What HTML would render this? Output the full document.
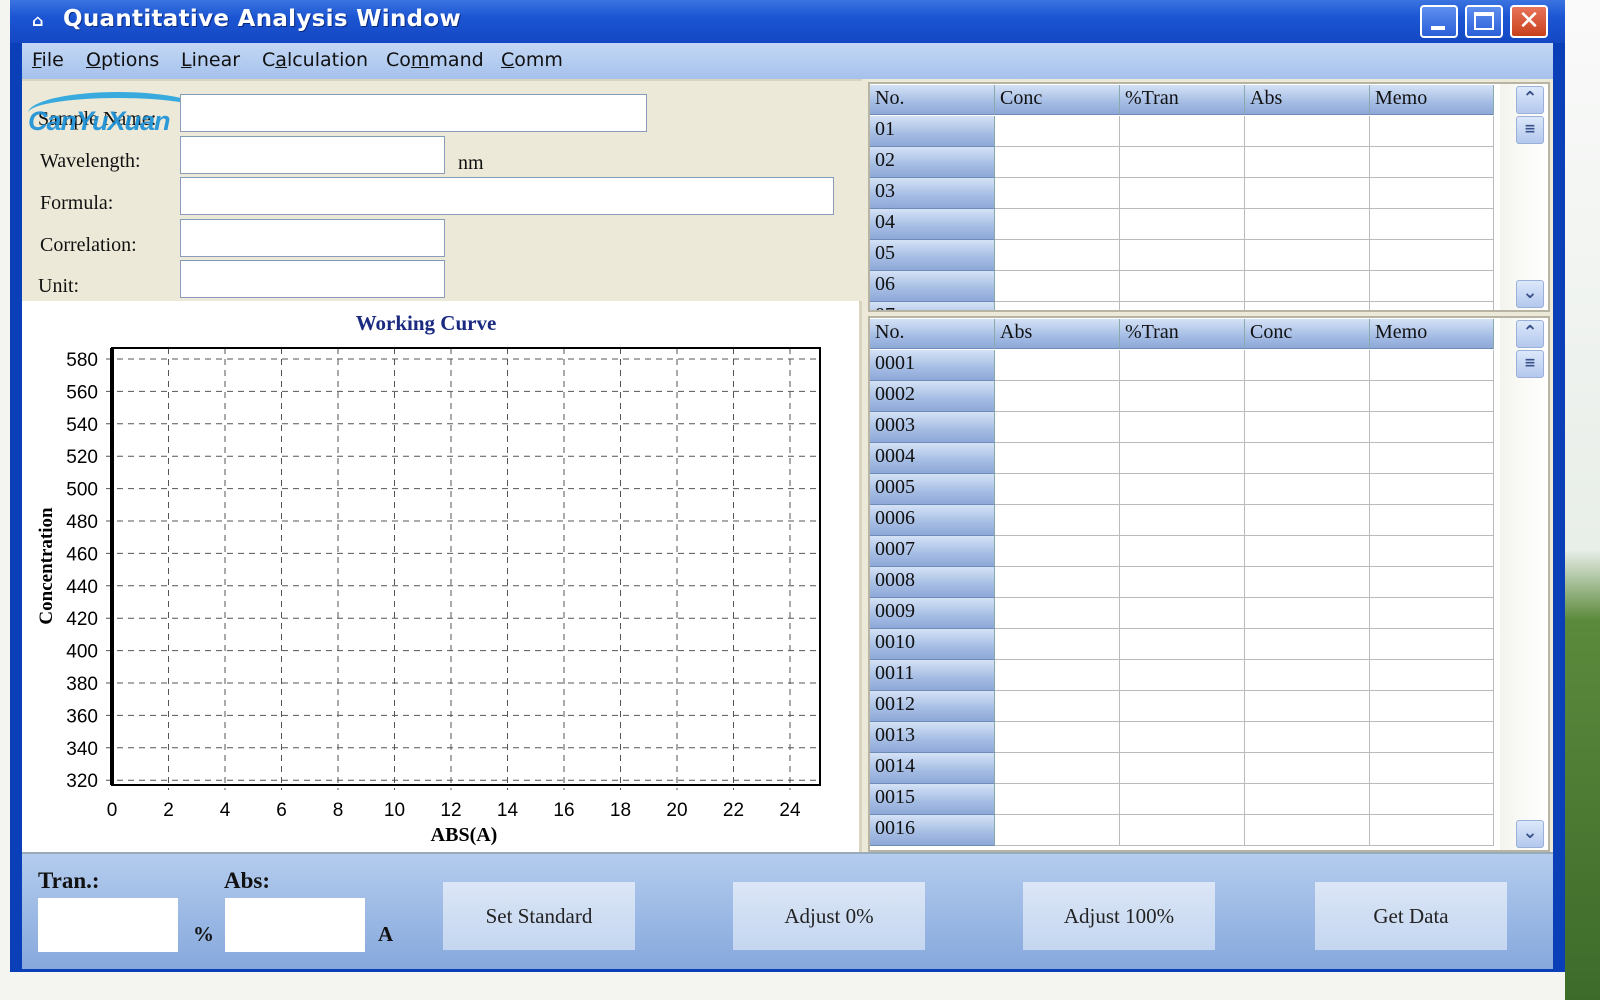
<!DOCTYPE html><html><head><meta charset="utf-8"><style>
*{margin:0;padding:0;box-sizing:border-box}
body{width:1600px;height:1000px;position:relative;overflow:hidden;background:#f4f4f0;font-family:"Liberation Serif",serif}
.a{position:absolute}
#desk{left:1565px;top:0;width:35px;height:1000px;background:linear-gradient(#fafafa 0,#e8eee8 55%,#5c8a3c 62%,#3d6b2a 100%)}
#win{left:10px;top:0;width:1555px;height:972px;background:#0b3fb8}
#title{left:10px;top:0;width:1555px;height:43px;background:linear-gradient(#3b74e0,#1b55d3 40%,#1447c2)}
#title span{position:absolute;left:53px;top:6px;color:#fff;font:bold 23px "DejaVu Sans",sans-serif;letter-spacing:.3px;text-shadow:1px 1px #0a2a80}
.tb{top:5px;width:38px;height:33px;border:2px solid #fff;border-radius:4px;background:linear-gradient(#5f8ff0,#2a5fd8)}
#menu{left:22px;top:43px;width:1531px;height:36px;background:linear-gradient(#c4d8f4,#a5c1ec)}
#menu span{position:absolute;top:6px;font:19px "DejaVu Sans",sans-serif;color:#111}
#form{left:22px;top:79px;width:840px;height:222px;background:#ece9d8;border-top:2px solid #d8d4c0}
.lbl{font:20px "Liberation Serif",serif;color:#111}
.in{background:#fff;border:1px solid #8c9cb8;border-top-color:#7f9db9}
#chart{left:22px;top:301px;width:840px;height:551px;background:#fff;border-right:3px solid #d8d4c0}
#right{left:862px;top:79px;width:691px;height:773px;background:#ece9d8}
.tbl{position:absolute;left:868px;background:#fff;border:2px solid #b8b4a4}
.hd,.rl{position:absolute;height:30px;border-right:1px solid #8aa;border-bottom:1px solid #6f8cb8;background:linear-gradient(#d4e2f6,#a4bce4 60%,#8ea8d8);font:20px "Liberation Serif",serif;color:#111;padding:2px 5px}
.cl{position:absolute;border-right:1px solid #bbb;border-bottom:1px solid #bbb}
.sb{position:absolute;width:28px;height:28px;border:1px solid #9bb0d8;border-radius:3px;background:linear-gradient(#dce8fa,#b4c8ee);color:#39518a;font:bold 18px "DejaVu Sans";text-align:center;line-height:24px}
#bot{left:22px;top:852px;width:1531px;height:117px;background:linear-gradient(#b4ccee,#86a8dc);border-top:2px solid #9ab}
.btn{position:absolute;top:882px;width:192px;height:68px;background:linear-gradient(#dbe6f6,#c4d6f0);font:21px "Liberation Serif",serif;text-align:center;line-height:68px;color:#222}
.bl{font:bold 23px "Liberation Serif",serif;color:#111}
</style></head><body>
<div class="a" id="desk"></div>
<div class="a" id="win"></div>
<div class="a" id="title"><span>Quantitative Analysis Window</span>
<div class="a" style="left:22px;top:11px;width:16px;height:16px;color:#fff;font:bold 16px DejaVu Sans">⌂</div></div>
<div class="a tb" style="left:1420px"><div class="a" style="left:9px;top:19px;width:14px;height:4px;background:#fff"></div></div>
<div class="a tb" style="left:1465px"><div class="a" style="left:7px;top:5px;width:20px;height:18px;border:2px solid #fff;border-top-width:4px"></div></div>
<div class="a tb" style="left:1510px;background:linear-gradient(#e8745a,#c8401c);color:#fff;font:bold 26px DejaVu Sans;text-align:center;line-height:28px">✕</div>
<div class="a" id="menu">
<span style="left:10px"><u>F</u>ile</span><span style="left:64px"><u>O</u>ptions</span><span style="left:159px"><u>L</u>inear</span><span style="left:240px">C<u>a</u>lculation</span><span style="left:364px">Co<u>m</u>mand</span><span style="left:479px"><u>C</u>omm</span></div>
<div class="a" id="form"></div>
<div class="a lbl" style="left:38px;top:108px">Sample Name:</div>
<div class="a" style="left:28px;top:92px;width:180px;height:42px;border-top:6px solid #1aa0e0;border-radius:60% 60% 0 0;opacity:.85"></div>
<div class="a" style="left:28px;top:106px;font:italic bold 27px 'Liberation Sans',sans-serif;color:#1890d8;letter-spacing:-1px;opacity:.9">CanYuXuan</div>
<div class="a in" style="left:180px;top:94px;width:467px;height:38px"></div>
<div class="a lbl" style="left:40px;top:150px">Wavelength:</div><div class="a in" style="left:180px;top:136px;width:265px;height:38px"></div>
<div class="a lbl" style="left:458px;top:152px">nm</div>
<div class="a lbl" style="left:40px;top:192px">Formula:</div><div class="a in" style="left:180px;top:177px;width:654px;height:38px"></div>
<div class="a lbl" style="left:40px;top:234px">Correlation:</div><div class="a in" style="left:180px;top:219px;width:265px;height:38px"></div>
<div class="a lbl" style="left:38px;top:275px">Unit:</div><div class="a in" style="left:180px;top:260px;width:265px;height:38px"></div>
<div class="a" id="chart"></div>
<svg class="a" style="left:0;top:0" width="870" height="852" id="sv"></svg>
<div class="a" id="right"></div>
<div class="tbl" style="top:82px;width:682px;height:230px" id="t1"></div>
<div class="tbl" style="top:316px;width:682px;height:536px" id="t2"></div>
<div class="a" id="bot"></div>
<div class="a bl" style="left:38px;top:868px">Tran.:</div>
<div class="a bl" style="left:224px;top:868px">Abs:</div>
<div class="a in" style="left:38px;top:898px;width:140px;height:54px;border:none"></div>
<div class="a in" style="left:225px;top:898px;width:140px;height:54px;border:none"></div>
<div class="a bl" style="left:193px;top:922px;font-size:21px">%</div>
<div class="a bl" style="left:378px;top:922px;font-size:21px">A</div>
<div class="btn" style="left:443px">Set Standard</div>
<div class="btn" style="left:733px">Adjust 0%</div>
<div class="btn" style="left:1023px">Adjust 100%</div>
<div class="btn" style="left:1315px">Get Data</div>
<script>
var s='<text x="426" y="330" text-anchor="middle" font-family="Liberation Serif" font-weight="bold" font-size="21" fill="#1a2a80">Working Curve</text>';
var L=112,R=820,T=348,B=785;
for(var i=0;i<=13;i++){var y=359+i*32.4;s+='<line x1="106" x2="'+R+'" y1="'+y+'" y2="'+y+'" stroke="#555" stroke-dasharray="6,5"/>';s+='<text x="98" y="'+(y+7)+'" text-anchor="end" font-family="Liberation Sans" font-size="19">'+(580-i*20)+'</text>';}
for(var j=0;j<=12;j++){var x=L+j*56.5;if(j>0)s+='<line x1="'+x+'" x2="'+x+'" y1="'+T+'" y2="'+(B+5)+'" stroke="#555" stroke-dasharray="6,5"/>';s+='<text x="'+x+'" y="816" text-anchor="middle" font-family="Liberation Sans" font-size="19">'+(j*2)+'</text>';}
s+='<rect x="'+L+'" y="'+T+'" width="'+(R-L)+'" height="'+(B-T)+'" fill="none" stroke="#000" stroke-width="2"/><line x1="'+L+'" x2="'+L+'" y1="'+T+'" y2="'+B+'" stroke="#000" stroke-width="4"/>';
s+='<text x="464" y="841" text-anchor="middle" font-family="Liberation Serif" font-weight="bold" font-size="20">ABS(A)</text>';
s+='<text transform="translate(52,566) rotate(-90)" text-anchor="middle" font-family="Liberation Serif" font-weight="bold" font-size="19">Concentration</text>';
document.getElementById('sv').innerHTML=s;
function tbl(id,cols,n,pad){var h='',cx=[0,125,250,375,500,624];
for(var c=0;c<5;c++)h+='<div class="hd" style="left:'+cx[c]+'px;top:1px;width:'+(cx[c+1]-cx[c])+'px">'+cols[c]+'</div>';
for(var r=0;r<n;r++){var y=32+r*31;var lab=String(r+1).padStart(pad,'0');
h+='<div class="rl" style="left:0;top:'+y+'px;width:125px;height:31px">'+lab+'</div>';
for(var c=1;c<5;c++)h+='<div class="cl" style="left:'+cx[c]+'px;top:'+y+'px;width:'+(cx[c+1]-cx[c])+'px;height:31px"></div>';}
h+='<div class="a" style="left:630px;top:0;width:48px;height:100%;background:linear-gradient(90deg,#f4f4ee,#fff)"></div>';
h+='<div class="sb" style="left:646px;top:2px">⌃</div><div class="sb" style="left:646px;top:32px;font-size:14px">≡</div><div class="sb" style="left:646px;bottom:2px">⌄</div>';
document.getElementById(id).innerHTML=h;}
tbl('t1',['No.','Conc','%Tran','Abs','Memo'],7,2);
tbl('t2',['No.','Abs','%Tran','Conc','Memo'],16,4);
document.querySelector('#t1').style.overflow='hidden';document.querySelector('#t2').style.overflow='hidden';
</script>
</body></html>
